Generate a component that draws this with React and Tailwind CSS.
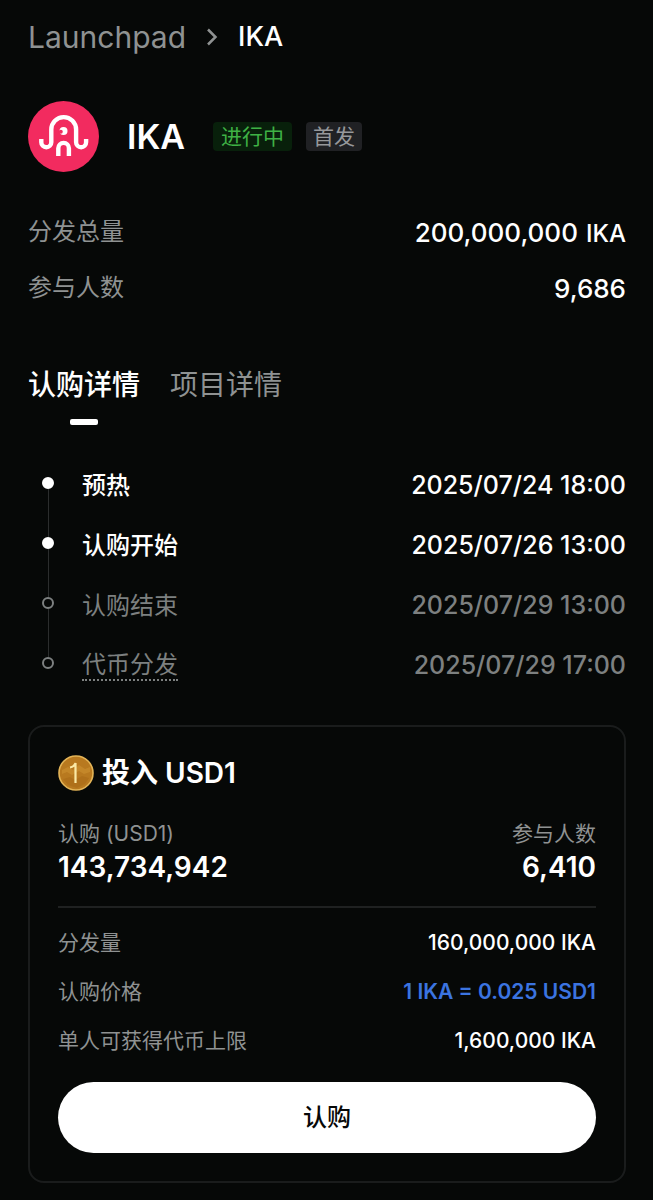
import { useState } from 'react';
import clsx from 'clsx';

const stats = [
  { label: '分发总量', value: '200,000,000', unit: 'IKA' },
  { label: '参与人数', value: '9,686' },
];

const tabs = [
  { id: 'subscribe', label: '认购详情' },
  { id: 'project', label: '项目详情' },
];

const steps = [
  { label: '预热', time: '2025/07/24 18:00', done: true },
  { label: '认购开始', time: '2025/07/26 13:00', done: true },
  { label: '认购结束', time: '2025/07/29 13:00', done: false },
  { label: '代币分发', time: '2025/07/29 17:00', done: false, hint: true },
];

const details = [
  { label: '分发量', value: '160,000,000 IKA' },
  { label: '认购价格', value: '1 IKA = 0.025 USD1', highlight: true },
  { label: '单人可获得代币上限', value: '1,600,000 IKA' },
];

const IkaLogo = () => (
  <svg viewBox="0 0 71 71" className="size-[71px] shrink-0" role="img" aria-label="IKA">
    <circle cx="35.5" cy="35.5" r="35.5" fill="#f22b5f" />
    <g fill="none" stroke="#fff" strokeWidth="4.400">
      <path d="M13.300 38v3.200a5 5 0 0 0 10 0V28.500a12.400 12.400 0 0 1 24.800 0V41.200a5 5 0 0 0 10 0V38" />
      <path d="M30.300 55V47.200a5.300 5.300 0 0 1 10.600 0V55" />
    </g>
    {/* Eye with its highlight cut out */}
    <circle cx="35.5" cy="30" r="4" fill="#fff" />
    <circle cx="32.800" cy="30.800" r="2" fill="#f22b5f" />
  </svg>
);

const CoinIcon = () => (
  <svg viewBox="0 0 36 36" className="size-9 shrink-0" aria-hidden="true">
    <circle cx="18" cy="18" r="17" fill="#b8791f" stroke="#e3b457" strokeWidth="1.600" />
    <path d="M4 15l6-3 5 3 6-5 6 4 5-2v5l-6 2-5-3-7 4-5-3-5 2z" fill="#c98d2e" opacity=".7" />
    <path d="M5 24l7-2 5 3 7-4 7 2-4 6-8 4-9-3z" fill="#a96b18" opacity=".6" />
    <path d="M12 12.500c3-.6 4.700-2 5.500-4.500V28" fill="none" stroke="#fbe9a5" strokeWidth="2.200" />
  </svg>
);

const Breadcrumb = () => (
  <nav aria-label="Breadcrumb" className="flex h-10 items-center text-[30px]">
    <a href="#launchpad" className="text-[#8f9292]">Launchpad</a>
    <svg viewBox="0 0 12 18" className="mx-5 h-[18px] w-3" fill="none" stroke="#8f9292" strokeWidth="2.500" aria-hidden="true">
      <path d="M2 1.500l7.500 7.500L2 16.500" />
    </svg>
    <span aria-current="page" className="text-[27px] font-medium">IKA</span>
  </nav>
);

const Timeline = () => (
  <ol className="mt-8">
    {steps.map(({ label, time, done, hint }, i) => (
      <li key={label} className={clsx('flex h-[60px]', done ? 'text-white' : 'text-[#7d8080]')}>
        <div className="mr-7 ml-[14px] flex w-3 flex-col items-center">
          <span className="h-5 w-px" />
          <span className={clsx('size-3 shrink-0 rounded-full border-2', done ? 'border-white bg-white' : 'border-[#7d8080]')} />
          {i < steps.length - 1 && <span className="-mb-5 w-px grow bg-[#2b2d2d]" />}
        </div>
        <div className="flex h-[58px] grow items-center justify-between">
          <span className={clsx('text-2xl', done && 'font-medium', hint && 'border-b-2 border-dotted border-[#7d8080] leading-7')}>
            {label}
          </span>
          <time className="text-[25px] font-medium">{time}</time>
        </div>
      </li>
    ))}
  </ol>
);

const PoolCard = () => (
  <section className="mt-7 rounded-2xl border-2 border-[#1a1c1c] p-7">
    <h2 className="flex h-9 items-center gap-2 text-[28px] font-semibold">
      <CoinIcon />
      投入 USD1
    </h2>

    <dl className="mt-7 flex justify-between">
      <div>
        <dt className="text-[21px] leading-[30px] text-[#8f9292]">认购 (USD1)</dt>
        <dd className="text-[28px] leading-9 font-semibold">143,734,942</dd>
      </div>
      <div className="text-right">
        <dt className="text-[21px] leading-[30px] text-[#8f9292]">参与人数</dt>
        <dd className="text-[28px] leading-9 font-semibold">6,410</dd>
      </div>
    </dl>

    <hr className="mt-[21px] mb-[10px] border-t-2 border-[#1f2121]" />

    <dl>
      {details.map(({ label, value, highlight }) => (
        <div key={label} className="flex h-[49px] items-center justify-between text-[21px]">
          <dt className="text-[#8f9292]">{label}</dt>
          <dd className={highlight ? 'font-semibold text-[#3b74e0]' : 'font-medium'}>{value}</dd>
        </div>
      ))}
    </dl>

    <button type="button" className="mt-[17px] h-[71px] w-full cursor-pointer rounded-full bg-white text-2xl font-medium text-[#060807]">
      认购
    </button>
  </section>
);

export default function App() {
  const [activeTab, setActiveTab] = useState('subscribe');

  return (
    <main
      lang="zh-CN"
      className="min-h-screen bg-[#060807] pt-[17px] pr-[27px] pb-4 pl-7 font-['Inter','Noto_Sans_CJK_SC',sans-serif] text-white"
    >
      <Breadcrumb />

      {/* Token header */}
      <header className="mt-11 flex items-center">
        <IkaLogo />
        <h1 className="ml-7 text-[34px] font-semibold">IKA</h1>
        <span className="ml-7 flex h-[29px] items-center rounded bg-[#08200b] px-2 text-[21px] text-[#3fb245]">进行中</span>
        <span className="ml-[14px] flex h-[29px] items-center rounded bg-[#202124] px-[7px] text-[21px] text-[#96989b]">首发</span>
      </header>

      {/* Totals */}
      <dl className="mt-8">
        {stats.map(({ label, value, unit }) => (
          <div key={label} className="flex h-14 items-center justify-between">
            <dt className="text-2xl text-[#8f9292]">{label}</dt>
            <dd className="text-[26px] font-medium">
              {value}
              {unit && <span className="ml-2 text-2xl">{unit}</span>}
            </dd>
          </div>
        ))}
      </dl>

      {/* Tabs */}
      <div role="tablist" className="mt-[49px] flex gap-[30px]">
        {tabs.map(({ id, label }) => (
          <button
            key={id}
            type="button"
            role="tab"
            aria-selected={activeTab === id}
            onClick={() => setActiveTab(id)}
            className={clsx(
              'flex cursor-pointer flex-col items-center text-[28px] leading-10',
              activeTab === id ? 'font-medium text-white' : 'text-[#8f9292]'
            )}
          >
            {label}
            {activeTab === id && <span className="mt-[14px] h-[6px] w-7 rounded-xs bg-white" />}
          </button>
        ))}
      </div>

      <Timeline />
      <PoolCard />
    </main>
  );
}
